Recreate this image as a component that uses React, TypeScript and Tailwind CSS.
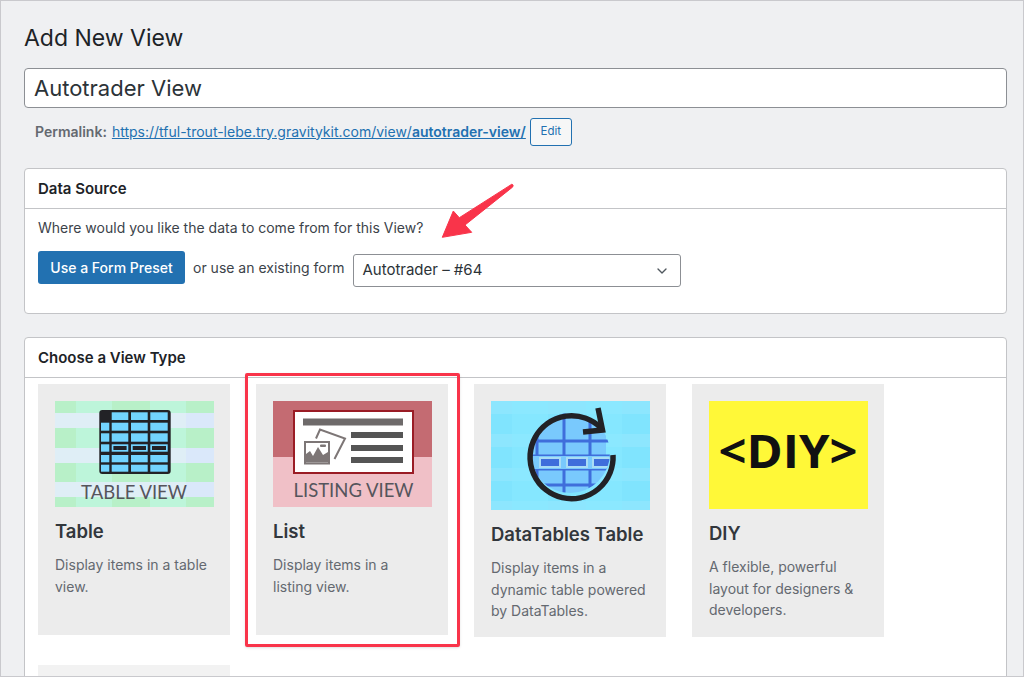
import { ChevronDown } from 'lucide-react'

function TableThumb() {
  const rows = [[11.3, 19], [21.7, 29.7], [32.3, 40.7], [43.3, 50.7], [54, 61.3], [63.7, 70.7]]
  const cols = [[46, 54.3], [56.7, 73.3], [76, 92.7], [95.3, 112.7]]
  return (
    <svg width="159" height="106" viewBox="0 0 159 106" className="block">
      <rect width="159" height="106" fill="#b8f0c8" />
      <rect x="21" width="36" height="106" fill="#bdf5da" />
      <rect x="95" width="36" height="106" fill="#bdf5da" />
      {[12, 47, 81].map((y) => (
        <g key={y}>
          <rect y={y} width="159" height="15" fill="#dfeef6" />
          <rect x="131" y={y} width="28" height="15" fill="#dae8fa" />
        </g>
      ))}
      <rect x="44.3" y="9" width="71.4" height="64" rx="3" fill="#222226" />
      {rows.map(([y1, y2], r) =>
        cols.map(([x1, x2], c) =>
          r === 0 && c === 0 ? null : (
            <rect key={`${r}-${c}`} x={x1} y={y1} width={x2 - x1} height={y2 - y1} fill="#72d4ff" />
          ),
        ),
      )}
      {cols.slice(1).map(([x1, x2]) => (
        <rect key={x1} x={x1 + 1.7} y="45" width={x2 - x1 - 3.4} height="4" fill="#222226" />
      ))}
      <text x="79" y="98" textAnchor="middle" fontFamily="Lato" fontSize="18.5" fill="#55555c">TABLE VIEW</text>
    </svg>
  )
}

function ListingThumb() {
  return (
    <svg width="159" height="106" viewBox="0 0 159 106" className="block">
      <rect width="159" height="106" fill="#f0c0c7" />
      <rect width="159" height="56" fill="#c46b72" />
      <rect x="21" y="10" width="119" height="62" fill="#fff" stroke="#9a1c25" strokeWidth="2" />
      <rect x="30" y="17.5" width="100" height="7" fill="#6e6a6a" />
      <rect x="78" y="31" width="52" height="6" fill="#555" />
      <rect x="78" y="44" width="52" height="6" fill="#555" />
      <rect x="78" y="56" width="52" height="6" fill="#555" />
      <path d="M43 37.5 L47 28.5 L72 37.5 L61.5 58" fill="none" stroke="#7d7676" strokeWidth="2" />
      <rect x="31" y="40" width="26" height="23.5" fill="#7d7676" />
      <rect x="33" y="42" width="22" height="19.5" fill="#fff" />
      <path d="M33 61.5 L33 53 L37 50 L40 55 L45 46 L50 54 L55 51 L55 61.5 Z" fill="#7d7676" />
      <rect x="47" y="43.5" width="6" height="2.5" rx="1" fill="#7d7676" />
      <text x="80.5" y="96" textAnchor="middle" fontFamily="Lato" fontSize="18.5" fill="#55555c">LISTING VIEW</text>
    </svg>
  )
}

function DataTablesThumb() {
  return (
    <svg width="159" height="109" viewBox="0 0 159 109" className="block">
      <defs>
        <clipPath id="globe">
          <circle cx="79" cy="52" r="40" />
        </clipPath>
      </defs>
      <rect width="159" height="109" fill="#80e4fe" />
      {[0, 33, 67, 100].map((y) => (
        <rect key={y} y={y} width="159" height="13" fill="#8de6fe" />
      ))}
      <rect x="21" width="36" height="109" fill="#8aeaff" opacity="0.5" />
      <rect x="95" width="36" height="109" fill="#8aeaff" opacity="0.5" />
      <g clipPath="url(#globe)">
        <rect x="35" y="8" width="80" height="88" fill="#79c9fd" />
        {[46, 73, 99].map((x) => (
          <rect key={x} x={x - 1.5} y="8" width="3" height="88" fill="#3f6edb" />
        ))}
        {[40, 55, 68, 84].map((y) => (
          <rect key={y} x="35" y={y - 1.5} width="84" height="3" fill="#3f6edb" />
        ))}
        <rect x="35" y="55" width="84" height="13" fill="#79c9fd" />
        {[48, 75, 101].map((x) => (
          <g key={x}>
            <rect x={x} y="56" width="22" height="11" fill="#a9dcf5" />
            <rect x={x + 2} y="58" width="18" height="7" fill="#3f6edb" />
          </g>
        ))}
      </g>
      <path d="M122 54 A41.5 41.5 0 1 1 110 27" fill="none" stroke="#222226" strokeWidth="5.5" />
      <path d="M107 7 L111.5 29 L92 31" fill="none" stroke="#222226" strokeWidth="5.5" />
    </svg>
  )
}

function DiyThumb() {
  return (
    <svg width="159" height="108" viewBox="0 0 159 108" className="block">
      <rect width="159" height="108" fill="#fff838" />
      <text x="79" y="67" textAnchor="middle" textLength="139" lengthAdjust="spacingAndGlyphs" fontFamily="'Open Sans'" fontWeight="700" fontSize="46" fill="#111">{'<DIY>'}</text>
    </svg>
  )
}

function ViewCard({ title, desc, thumb, height, selected }: { title: string; desc: string; thumb: React.ReactNode; height: string; selected?: boolean }) {
  return (
    <div className={`relative w-[192px] ${height} bg-[#ececec] p-[17px]`}>
      {thumb}
      <h4 className="mt-3 whitespace-nowrap text-[18.5px] leading-6 font-semibold text-[#32373c]">{title}</h4>
      <p className="mt-[11px] text-[14px] leading-[21.5px] text-[#646970]">{desc}</p>
      {selected && (
        <div className="absolute -left-[11px] -right-[12px] -top-[11px] -bottom-[12px] rounded-[2px] border-[3px] border-[#f9344a] shadow-sm" />
      )}
    </div>
  )
}

export default function App() {
  return (
    <div className="relative h-[677px] w-[1024px] overflow-hidden border border-[#c9c9cd] bg-[#eff0f2] pl-[23px] pr-4 font-['Inter',sans-serif] text-[#3c434a]">
      <h1 className="mt-[23px] text-[23px] leading-7 font-normal text-[#1d2327]">Add New View</h1>

      <input
        readOnly
        value="Autotrader View"
        className="mt-4 block h-10 w-[983px] rounded-[4px] border border-[#8c8f94] bg-white px-[9px] text-[22px] text-[#2c3338] outline-none"
      />

      <div className="mt-[10px] flex h-7 items-center pl-[11px] text-[14px]">
        <span className="-mt-0.5 font-semibold text-[#646970]">Permalink:</span>
        <a href="#" className="-mt-0.5 ml-[5px] text-[#2271b1] underline">
          https://tful-trout-lebe.try.gravitykit.com/view/<span className="font-semibold">autotrader-view/</span>
        </a>
        <button className="ml-1 h-7 w-[42px] rounded-[3px] border border-[#2271b1] bg-[#f6f7f7] text-[11.5px] text-[#2271b1]">Edit</button>
      </div>

      <section className="mt-[22px] h-[146px] w-[983px] rounded-[4px] border border-[#c3c4c7] bg-white">
        <h3 className="flex h-10 items-center border-b border-[#c3c4c7] pl-[13px] pt-0.5 text-[15px] font-semibold text-[#1d2327]">Data Source</h3>
        <div className="pl-[13px] pt-[9px]">
          <p className="text-[14px] leading-5">Where would you like the data to come from for this View?</p>
          <div className="mt-[13px] flex items-start">
            <button className="h-[33px] w-[147px] rounded-[3px] bg-[#2271b1] text-[14px] font-medium text-white">Use a Form Preset</button>
            <span className="ml-2 text-[14px] leading-[33px]">or use an existing form</span>
            <div className="ml-[9px] mt-[3px] flex h-[33px] w-[328px] items-center justify-between rounded-[3px] border border-[#8c8f94] pl-2 pr-[10px] text-[15px] text-[#2c3338]">
              Autotrader – #64
              <ChevronDown size={16} strokeWidth={2} className="text-[#50575e]" />
            </div>
          </div>
        </div>
      </section>

      <section className="mt-[23px] h-[400px] w-[983px] rounded-[4px] border border-[#c3c4c7] bg-white">
        <h3 className="flex h-[40px] items-center border-b border-[#c3c4c7] pl-[13px] pt-0.5 text-[15px] font-semibold text-[#1d2327]">Choose a View Type</h3>
        <div className="flex flex-wrap items-start gap-x-[26px] gap-y-7 pl-[13px] pt-[6px]">
          <ViewCard title="Table" desc="Display items in a table view." thumb={<TableThumb />} height="h-[251px]" />
          <ViewCard title="List" desc="Display items in a listing view." thumb={<ListingThumb />} height="h-[251px]" selected />
          <ViewCard title="DataTables Table" desc="Display items in a dynamic table powered by DataTables." thumb={<DataTablesThumb />} height="h-[253px]" />
          <ViewCard title="DIY" desc="A flexible, powerful layout for designers & developers." thumb={<DiyThumb />} height="h-[253px]" />
          <div className="h-[100px] w-[192px] bg-[#f2f2f2]" />
        </div>
      </section>

      <svg width="90" height="70" viewBox="0 0 90 70" className="absolute left-[433px] top-[175px]">
        <path d="M8.3 61.3 L19.3 35 L25.3 41.7 L77.7 8.3 Q80 8.5 78.7 11 L31 49 L37.7 56.3 Z" fill="#f9344a" stroke="#f9344a" strokeWidth="1" strokeLinejoin="round" />
      </svg>
    </div>
  )
}
